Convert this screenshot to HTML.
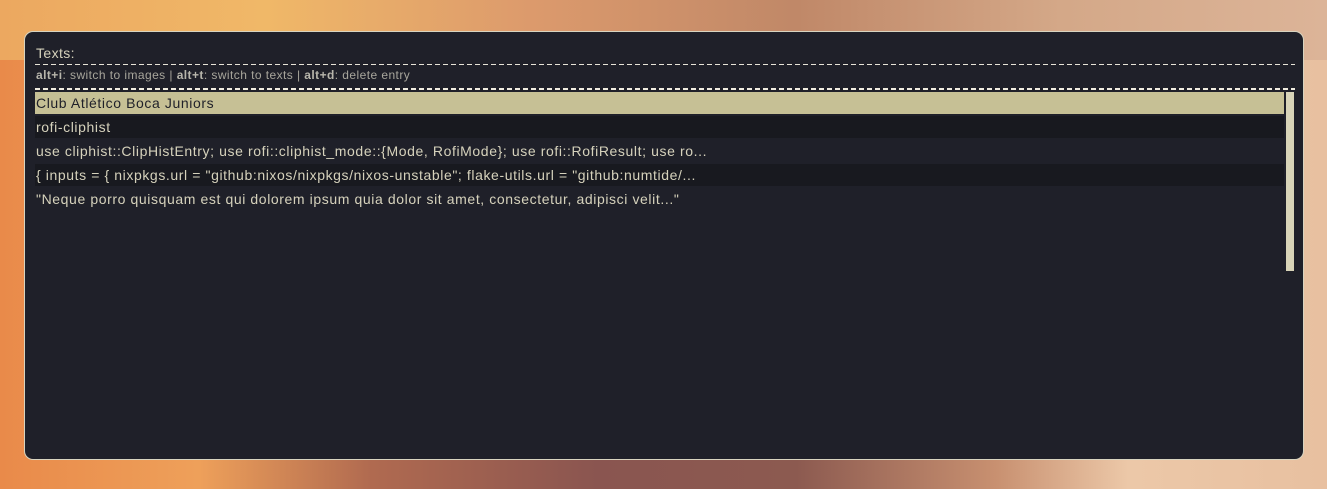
<!DOCTYPE html>
<html><head><style>
html,body{margin:0;padding:0;width:1327px;height:489px;overflow:hidden;}
body{position:relative;background:
linear-gradient(90deg,#e98a4a 0%,#eea05a 15%,#b06a50 28%,#8a5550 45%,#8c5a50 60%,#c89070 75%,#ecc8a8 85%,#e8c0a0 100%);
font-family:"Liberation Sans","DejaVu Sans",sans-serif;}
.top{position:absolute;left:0;top:0;width:1327px;height:60px;background:linear-gradient(90deg,#eca860 0%,#f0b868 20%,#dc9a6c 40%,#c08868 60%,#d4a888 80%,#dcb498 100%);}
.win{position:absolute;left:24px;top:31px;width:1278px;height:427px;background:#1f2029;border:1px solid #d8d4c0;border-radius:9px;color:#d6d2bc;}
.t{position:absolute;left:11px;top:13px;font-size:14px;letter-spacing:0.4px;}
.d1{position:absolute;left:10px;top:32px;width:1260px;height:1px;background:repeating-linear-gradient(90deg,#e8e4d8 0 5px,transparent 5px 8px);}
.h{position:absolute;left:11px;top:36px;font-size:12px;color:#a8a69c;letter-spacing:0.43px;}
.h b{color:#b8b6ac;}
.d2{position:absolute;left:10px;top:56px;width:1260px;height:2px;background:repeating-linear-gradient(90deg,#f0ece0 0 5px,transparent 5px 8px);}
.r{position:absolute;left:10px;width:1249px;height:22px;font-size:14px;line-height:22px;padding-left:1px;box-sizing:border-box;white-space:nowrap;letter-spacing:0.6px;}
.sel{background:#c6c095;color:#1f2029;}
.alt{background:#18191f;}
.sb{position:absolute;left:1261px;top:60px;width:8px;height:179px;background:#d8d4b8;}
</style></head><body>
<div class="top"></div>
<div class="win">
<div class="t">Texts:</div>
<div class="d1"></div>
<div class="h"><b>alt+i</b>: switch to images | <b>alt+t</b>: switch to texts | <b>alt+d</b>: delete entry</div>
<div class="d2"></div>
<div class="r sel" style="top:60px">Club Atlético Boca Juniors</div>
<div class="r alt" style="top:84px">rofi-cliphist</div>
<div class="r" style="top:108px">use cliphist::ClipHistEntry; use rofi::cliphist_mode::{Mode, RofiMode}; use rofi::RofiResult; use ro...</div>
<div class="r alt" style="top:132px">{ inputs = { nixpkgs.url = "github:nixos/nixpkgs/nixos-unstable"; flake-utils.url = "github:numtide/...</div>
<div class="r" style="top:156px">"Neque porro quisquam est qui dolorem ipsum quia dolor sit amet, consectetur, adipisci velit..."</div>
<div class="sb"></div>
</div>
</body></html>
